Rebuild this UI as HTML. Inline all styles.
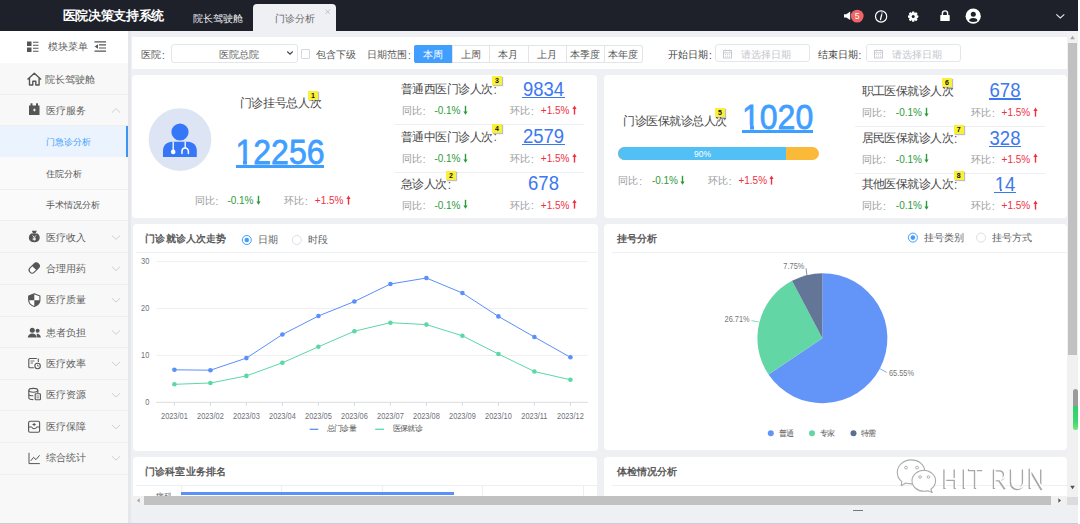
<!DOCTYPE html>
<html><head><meta charset="utf-8"><style>
*{box-sizing:border-box;margin:0;padding:0}
html,body{width:1080px;height:524px;overflow:hidden;background:#eff0f4;font-family:"Liberation Sans",sans-serif;color:#333}
.a{position:absolute;white-space:nowrap}
.card{position:absolute;background:#fff;border-radius:4px}
.g{color:#999}
.gr{color:#2f9a3c}
.rd{color:#f0303f}
.bd{position:absolute;background:#f9f03a;color:#111;font-weight:bold;font-size:7px;line-height:9px;text-align:center;width:10px;height:9px;box-shadow:1px 1px 1px rgba(0,0,0,.25)}
.sb{position:absolute;left:0;width:128px}
.st{position:absolute;font-size:10px;line-height:14px;color:#555}
</style></head><body>
<div class="a" style="left:0px;top:0px;width:1080px;height:30.5px;background:#1e212a;"></div>
<div class="a" style="left:62.5px;top:6.5px;font-size:12.6px;line-height:18px;color:#fff;font-weight:bold;letter-spacing:-0.3px">医院决策支持系统</div>
<div class="a" style="left:192.5px;top:12.0px;font-size:10px;line-height:14px;color:#f2f3f5;font-weight:normal;">院长驾驶舱</div>
<div class="a" style="left:253px;top:4px;width:83px;height:27px;background:#eff0f4;border-radius:4px 4px 0 0"></div>
<div class="a" style="left:274.5px;top:11.9px;font-size:10px;line-height:14px;color:#666;font-weight:normal;">门诊分析</div>
<svg class="a" style="left:323.5px;top:7.7px" width="8" height="8" viewBox="0 0 8 8"><path d="M1.5 1.5L6 6M6 1.5L1.5 6" stroke="#b9bcc2" stroke-width="0.9"/></svg>
<svg class="a" style="left:838px;top:6px" width="240" height="22" viewBox="838 6 240 22">
<path d="M844 14.2h2.3l3.9-2.6v8.4l-3.9-2.4H844z" fill="#fff"/>
<circle cx="857.2" cy="16.1" r="6.4" fill="#ef6464"/>
<text x="857.2" y="19.3" font-size="8.5" fill="#fff" text-anchor="middle" font-family="Liberation Sans">5</text>
<circle cx="881.1" cy="16.5" r="5.6" fill="none" stroke="#fff" stroke-width="1.2"/>
<path d="M882 12.9v0.1M881.7 14.7l-1.2 4.8" stroke="#fff" stroke-width="1.3" stroke-linecap="round"/>
<g transform="translate(913.2 16.6)"><circle r="3.5" fill="#fff"/><g fill="#fff">
<rect x="-1.3" y="-5.2" width="2.6" height="10.4" rx=".8"/>
<rect x="-1.3" y="-5.2" width="2.6" height="10.4" rx=".8" transform="rotate(45)"/>
<rect x="-1.3" y="-5.2" width="2.6" height="10.4" rx=".8" transform="rotate(90)"/>
<rect x="-1.3" y="-5.2" width="2.6" height="10.4" rx=".8" transform="rotate(135)"/></g>
<circle r="1.5" fill="#1e212a"/></g>
<path d="M942.4 15.5v-2a2.6 2.6 0 0 1 5.2 0v2" fill="none" stroke="#fff" stroke-width="1.4"/>
<rect x="940.3" y="15.1" width="9.4" height="5.9" rx=".6" fill="#fff"/>
<circle cx="973.2" cy="16.2" r="7.6" fill="#fff"/>
<circle cx="973.3" cy="14.3" r="2.5" fill="#1e212a"/>
<path d="M969.2 20.6a4.1 2.6 0 0 1 8.2 0a4.1 1.3 0 0 1-8.2 0z" fill="#1e212a"/>
<path d="M1056.3 14.3l4 3.6l4-3.6" fill="none" stroke="#e6e8ec" stroke-width="1.1"/>
</svg>
<div class="a" style="left:0px;top:30.5px;width:128px;height:494px;background:#f8f8f8;"></div>
<div class="a" style="left:127.5px;top:30.5px;width:3px;height:494px;background:#e6e7eb;"></div>
<div class="a" style="left:0px;top:30.5px;width:127.5px;height:32px;background:#fff;"></div>
<div class="a" style="left:0px;top:93.9px;width:127.5px;height:1px;background:#efefef;"></div>
<div class="a" style="left:0px;top:125.0px;width:127.5px;height:1px;background:#efefef;"></div>
<div class="a" style="left:0px;top:125.5px;width:127.5px;height:31.900000000000006px;background:#ebf4fe;"></div>
<div class="a" style="left:125.5px;top:125.5px;width:2.2px;height:31.900000000000006px;background:#3e94f5;"></div>
<div class="a" style="left:0px;top:156.9px;width:127.5px;height:1px;background:#efefef;"></div>
<div class="a" style="left:0px;top:157.4px;width:127.5px;height:32.099999999999994px;background:#fafafa;"></div>
<div class="a" style="left:0px;top:189.0px;width:127.5px;height:1px;background:#efefef;"></div>
<div class="a" style="left:0px;top:189.5px;width:127.5px;height:31.0px;background:#fafafa;"></div>
<div class="a" style="left:0px;top:220.0px;width:127.5px;height:1px;background:#efefef;"></div>
<div class="a" style="left:0px;top:251.9px;width:127.5px;height:1px;background:#efefef;"></div>
<div class="a" style="left:0px;top:283.5px;width:127.5px;height:1px;background:#efefef;"></div>
<div class="a" style="left:0px;top:315.5px;width:127.5px;height:1px;background:#efefef;"></div>
<div class="a" style="left:0px;top:347.1px;width:127.5px;height:1px;background:#efefef;"></div>
<div class="a" style="left:0px;top:378.7px;width:127.5px;height:1px;background:#efefef;"></div>
<div class="a" style="left:0px;top:410.3px;width:127.5px;height:1px;background:#efefef;"></div>
<div class="a" style="left:0px;top:441.9px;width:127.5px;height:1px;background:#efefef;"></div>
<div class="a" style="left:0px;top:473.5px;width:127.5px;height:1px;background:#efefef;"></div>
<div class="a" style="left:47.7px;top:40.0px;font-size:10px;line-height:14px;color:#606060;font-weight:normal;">模块菜单</div>
<svg class="a" style="left:26px;top:40px" width="82" height="14" viewBox="26 40 82 14">
<rect x="27" y="41.5" width="4.5" height="4.5" fill="#555"/><rect x="27" y="47.5" width="4.5" height="4.5" fill="#555"/>
<path d="M33 42.2h5.5M33 45.2h5.5M33 48.2h5.5M33 51.2h5.5" stroke="#555" stroke-width="1.1"/>
<path d="M94.5 41.8h11.5M99 44.9h7M99 48h7M94.5 51.2h11.5" stroke="#555" stroke-width="1.2"/>
<path d="M98 44.2l-3.3 2.3l3.3 2.3z" fill="#555"/>
</svg>
<div class="a" style="left:45.4px;top:72.5px;font-size:10px;line-height:14px;color:#606060;font-weight:normal;">院长驾驶舱</div>
<div class="a" style="left:45.8px;top:103.5px;font-size:10px;line-height:14px;color:#606060;font-weight:normal;">医疗服务</div>
<div class="a" style="left:45.5px;top:136.2px;font-size:9px;line-height:13px;color:#409eff;font-weight:normal;">门急诊分析</div>
<div class="a" style="left:45.5px;top:168.3px;font-size:9px;line-height:13px;color:#555;font-weight:normal;">住院分析</div>
<div class="a" style="left:45.5px;top:199.1px;font-size:9px;line-height:13px;color:#555;font-weight:normal;">手术情况分析</div>
<div class="a" style="left:45.5px;top:230.6px;font-size:10px;line-height:14px;color:#606060;font-weight:normal;">医疗收入</div>
<div class="a" style="left:45.5px;top:261.8px;font-size:10px;line-height:14px;color:#606060;font-weight:normal;">合理用药</div>
<div class="a" style="left:45.5px;top:293.3px;font-size:10px;line-height:14px;color:#606060;font-weight:normal;">医疗质量</div>
<div class="a" style="left:45.5px;top:325.5px;font-size:10px;line-height:14px;color:#606060;font-weight:normal;">患者负担</div>
<div class="a" style="left:45.5px;top:357.0px;font-size:10px;line-height:14px;color:#606060;font-weight:normal;">医疗效率</div>
<div class="a" style="left:45.5px;top:388.2px;font-size:10px;line-height:14px;color:#606060;font-weight:normal;">医疗资源</div>
<div class="a" style="left:45.5px;top:420.0px;font-size:10px;line-height:14px;color:#606060;font-weight:normal;">医疗保障</div>
<div class="a" style="left:45.5px;top:451.3px;font-size:10px;line-height:14px;color:#606060;font-weight:normal;">综合统计</div>
<svg class="a" style="left:0;top:0" width="128" height="524"><path d="M112 112.5l4-3.8l4 3.8" fill="none" stroke="#c8c9cc" stroke-width="0.9"/></svg>
<svg class="a" style="left:0;top:0" width="128" height="524"><path d="M112 235.6l4 3.8l4-3.8" fill="none" stroke="#c8c9cc" stroke-width="0.9"/></svg>
<svg class="a" style="left:0;top:0" width="128" height="524"><path d="M112 266.8l4 3.8l4-3.8" fill="none" stroke="#c8c9cc" stroke-width="0.9"/></svg>
<svg class="a" style="left:0;top:0" width="128" height="524"><path d="M112 298.3l4 3.8l4-3.8" fill="none" stroke="#c8c9cc" stroke-width="0.9"/></svg>
<svg class="a" style="left:0;top:0" width="128" height="524"><path d="M112 330.5l4 3.8l4-3.8" fill="none" stroke="#c8c9cc" stroke-width="0.9"/></svg>
<svg class="a" style="left:0;top:0" width="128" height="524"><path d="M112 362l4 3.8l4-3.8" fill="none" stroke="#c8c9cc" stroke-width="0.9"/></svg>
<svg class="a" style="left:0;top:0" width="128" height="524"><path d="M112 393.2l4 3.8l4-3.8" fill="none" stroke="#c8c9cc" stroke-width="0.9"/></svg>
<svg class="a" style="left:0;top:0" width="128" height="524"><path d="M112 425l4 3.8l4-3.8" fill="none" stroke="#c8c9cc" stroke-width="0.9"/></svg>
<svg class="a" style="left:0;top:0" width="128" height="524"><path d="M112 456.3l4 3.8l4-3.8" fill="none" stroke="#c8c9cc" stroke-width="0.9"/></svg>
<svg class="a" style="left:0;top:0" width="128" height="524" viewBox="0 0 128 524">
<path d="M27.5 79.5l6.8-6.2l6.8 6.2M29.5 78v7h3.3v-3.8h3v3.8h3.3v-7" fill="none" stroke="#555" stroke-width="1.4" stroke-linejoin="round"/>
<path d="M29 105.5h10.5v9.5h-10.5z" fill="#555"/><rect x="30.5" y="103.3" width="2" height="3" fill="#555"/><rect x="36" y="103.3" width="2" height="3" fill="#555"/>
<path d="M33 110h2.8M34.4 108.6v2.8" stroke="#fff" stroke-width="0.9"/>
<path d="M31.2 233.6C27.6 236 27.8 242.3 34.3 242.3C40.8 242.3 41 236 37.4 233.6Z" fill="#555"/><path d="M31.8 230.8h5l-1.3 2.6h-2.4z" fill="#555"/>
<path d="M32.6 235.4l1.7 2.1l1.7-2.1M34.3 237.5v3.2M32.7 238.3h3.2M32.7 239.6h3.2" stroke="#fff" stroke-width=".8" fill="none"/>
<g transform="rotate(-45 34.2 268)"><rect x="28.3" y="265" width="11.8" height="6" rx="3" fill="#fff" stroke="#555" stroke-width="1.1"/><path d="M34.2 265h3a3 3 0 0 1 0 6h-3z" fill="#555"/></g>
<path d="M34.3 293.8l5.6 2.1v4.3c0 3.3-2.6 5.2-5.6 6.2c-3-1-5.6-2.9-5.6-6.2v-4.3z" fill="#fff" stroke="#555" stroke-width="1.1" stroke-linejoin="round"/>
<path d="M34.3 293.8L28.7 295.9V300.2H34.3Z M34.3 300.2H39.9c0 3.3-2.6 5.2-5.6 6.2Z" fill="#555"/>
<circle cx="32.3" cy="330.3" r="2.5" fill="#555"/><path d="M27.8 337.6a4.5 4.2 0 0 1 9 0z" fill="#555"/>
<circle cx="37.6" cy="330.8" r="2" fill="#555"/><path d="M36.6 333.8a4 3.8 0 0 1 4.2 3.8h-3.6z" fill="#555"/>
<path d="M36.8 358.5h-7a1 1 0 0 0-1 1v7.3a1 1 0 0 0 1 1h4" fill="none" stroke="#555" stroke-width="1.1"/><path d="M38.3 358.5v3.5" stroke="#555" stroke-width="1.1"/><path d="M30.5 361h4M30.5 363h2.5" stroke="#555" stroke-width=".8"/><circle cx="37.6" cy="366" r="2.7" fill="#fff" stroke="#555" stroke-width="1.1"/><path d="M37.6 364.6v1.5h1.2" stroke="#555" stroke-width=".8" fill="none"/>
<ellipse cx="33.3" cy="390.3" rx="4.5" ry="1.9" fill="none" stroke="#555" stroke-width="1.1"/><path d="M28.8 390.3v7.4c0 1 2 1.9 4.5 1.9M37.8 390.3v2.8M28.8 393.9c0 1 2 1.9 4.5 1.9" fill="none" stroke="#555" stroke-width="1.1"/><rect x="35.2" y="393.8" width="5.2" height="6" rx=".6" fill="#fff" stroke="#555" stroke-width="1.1"/><path d="M36.5 396h2.6M36.5 397.8h2.6" stroke="#555" stroke-width=".7"/>
<rect x="28.6" y="421.2" width="11" height="11" rx="1.5" fill="none" stroke="#555" stroke-width="1.1"/><path d="M28.6 427h3.3l.8 1.6h3l.8-1.6h3.1M34.1 422.9v3.2M32.5 424.5h3.2" fill="none" stroke="#555" stroke-width="1"/>
<path d="M29 452.8v10.8h10.8" fill="none" stroke="#555" stroke-width="1"/><path d="M30.8 460.8l2.8-3.4l2.4 2.2l3.6-4.3" fill="none" stroke="#555" stroke-width="1"/>
</svg>
<div class="a" style="left:130.5px;top:30.5px;width:937px;height:6.5px;background:#eff0f4;"></div>
<div class="a" style="left:132px;top:37px;width:935px;height:32px;background:#fff;"></div>
<div class="a" style="left:141px;top:47.9px;font-size:10px;line-height:14px;color:#555;font-weight:normal;">医院<span style="position:relative;top:0.8px;margin-left:1px">:</span></div>
<div class="a" style="left:171px;top:44px;width:126.5px;height:18.5px;border:1px solid #e4e6eb;border-radius:3px;background:#fff"></div>
<div class="a" style="left:219px;top:47.9px;font-size:10px;line-height:14px;color:#606266;font-weight:normal;">医院总院</div>
<svg class="a" style="left:286px;top:50px" width="8" height="6"><path d="M1.3 1.5l2.7 2.7l2.7-2.7" fill="none" stroke="#444" stroke-width="1.1"/></svg>
<div class="a" style="left:300.5px;top:49px;width:9px;height:9.5px;border:1px solid #d6d8dd;border-radius:1px;background:#fff"></div>
<div class="a" style="left:316px;top:47.9px;font-size:10px;line-height:14px;color:#555;font-weight:normal;">包含下级</div>
<div class="a" style="left:367px;top:47.9px;font-size:10px;line-height:14px;color:#555;font-weight:normal;">日期范围<span style="position:relative;top:0.8px;margin-left:1px">:</span></div>
<div class="a" style="left:414px;top:45px;width:229px;height:17.5px;border:1px solid #e2e4e8;border-radius:2px"></div>
<div class="a" style="left:414px;top:45px;width:37.69999999999999px;height:17.5px;background:#409eff;border-radius:2px 0 0 2px"></div>
<div class="a" style="left:414.0px;width:37.69999999999999px;text-align:center;top:47.5px;font-size:10px;line-height:14px;color:#fff;font-weight:normal;">本周</div>
<div class="a" style="left:451.7px;top:45px;width:0.8px;height:17.5px;background:#e2e4e8;"></div>
<div class="a" style="left:451.7px;width:37.69999999999999px;text-align:center;top:47.5px;font-size:10px;line-height:14px;color:#555;font-weight:normal;">上周</div>
<div class="a" style="left:489.4px;top:45px;width:0.8px;height:17.5px;background:#e2e4e8;"></div>
<div class="a" style="left:489.4px;width:38.10000000000002px;text-align:center;top:47.5px;font-size:10px;line-height:14px;color:#555;font-weight:normal;">本月</div>
<div class="a" style="left:527.5px;top:45px;width:0.8px;height:17.5px;background:#e2e4e8;"></div>
<div class="a" style="left:527.5px;width:38.0px;text-align:center;top:47.5px;font-size:10px;line-height:14px;color:#555;font-weight:normal;">上月</div>
<div class="a" style="left:565.5px;top:45px;width:0.8px;height:17.5px;background:#e2e4e8;"></div>
<div class="a" style="left:565.5px;width:38.10000000000002px;text-align:center;top:47.5px;font-size:10px;line-height:14px;color:#555;font-weight:normal;">本季度</div>
<div class="a" style="left:603.6px;top:45px;width:0.8px;height:17.5px;background:#e2e4e8;"></div>
<div class="a" style="left:603.6px;width:39.39999999999998px;text-align:center;top:47.5px;font-size:10px;line-height:14px;color:#555;font-weight:normal;">本年度</div>
<div class="a" style="left:668px;top:47.9px;font-size:10px;line-height:14px;color:#444;font-weight:normal;">开始日期<span style="position:relative;top:0.8px;margin-left:1px">:</span></div>
<div class="a" style="left:817.6px;top:47.9px;font-size:10px;line-height:14px;color:#444;font-weight:normal;">结束日期<span style="position:relative;top:0.8px;margin-left:1px">:</span></div>
<div class="a" style="left:715px;top:44.3px;width:95px;height:18px;border:1px solid #e4e6eb;border-radius:3px;background:#fff"></div>
<svg class="a" style="left:722px;top:48px" width="12" height="12" viewBox="0 0 12 12"><rect x="1.5" y="2.5" width="8" height="7.5" fill="none" stroke="#c8cbd1" stroke-width="1"/><path d="M1.5 4.8h8M3.5 1.5v2M7.5 1.5v2M3 6.5h1M5 6.5h1M7 6.5h1M3 8.3h1M5 8.3h1M7 8.3h1" stroke="#c8cbd1" stroke-width=".9"/></svg>
<div class="a" style="left:740.5px;top:47.9px;font-size:10px;line-height:14px;color:#c2c5cc;font-weight:normal;">请选择日期</div>
<div class="a" style="left:866px;top:44.3px;width:95px;height:18px;border:1px solid #e4e6eb;border-radius:3px;background:#fff"></div>
<svg class="a" style="left:873px;top:48px" width="12" height="12" viewBox="0 0 12 12"><rect x="1.5" y="2.5" width="8" height="7.5" fill="none" stroke="#c8cbd1" stroke-width="1"/><path d="M1.5 4.8h8M3.5 1.5v2M7.5 1.5v2M3 6.5h1M5 6.5h1M7 6.5h1M3 8.3h1M5 8.3h1M7 8.3h1" stroke="#c8cbd1" stroke-width=".9"/></svg>
<div class="a" style="left:891.5px;top:47.9px;font-size:10px;line-height:14px;color:#c2c5cc;font-weight:normal;">请选择日期</div>
<div class="card" style="left:132.3px;top:75px;width:465px;height:143px"></div>
<div class="card" style="left:604px;top:75.3px;width:462.5px;height:142.5px"></div>
<svg class="a" style="left:148px;top:107px" width="64" height="65" viewBox="148 107 64 65">
<circle cx="180" cy="139.6" r="31.4" fill="#dde4f3"/>
<circle cx="180" cy="132" r="8.6" fill="#3577f6"/>
<path d="M163 157V150.5C163 145.5 167 141.7 172 141.7H188C193 141.7 196.8 145.5 196.8 150.5V157Z" fill="#3577f6"/>
<path d="M173.2 141.5V150M185.2 141.5V148" stroke="#fff" stroke-width="1.3" fill="none"/>
<circle cx="173.2" cy="151.9" r="2.3" fill="#fff"/>
<path d="M182 153.6V151.2A3.2 3.2 0 0 1 188.4 151.2V153.6" stroke="#fff" stroke-width="1.5" fill="none" stroke-linecap="round"/>
</svg>
<div class="a" style="left:239.5px;top:95.3px;font-size:12px;line-height:16px;color:#4a4a4a;font-weight:normal;letter-spacing:-0.3px">门诊挂号总人次</div>
<div class="bd" style="left:308px;top:90.6px">1</div>
<div class="a" style="left:235.5px;top:132px;font-size:32px;line-height:38px;color:#409eff;-webkit-text-stroke:0.7px #409eff;transform:scaleY(1.1);transform-origin:0 8px">12256</div>
<div class="a" style="left:235.5px;top:165.2px;width:88.5px;height:3px;background:#409eff;"></div>
<div class="a" style="left:237px;top:160px;width:6px;height:5px;background:#fff;"></div>
<div class="a" style="left:247px;top:160px;width:6px;height:5px;background:#fff;"></div>
<div class="a" style="left:194.5px;top:194.0px;font-size:10px;line-height:14px;color:#999;font-weight:normal;">同比<span style="position:relative;top:0.8px;margin-left:1px">:</span></div>
<div class="a" style="left:227.4px;top:194.0px;font-size:10px;line-height:14px;color:#2f9a3c;font-weight:normal;">-0.1%</div>
<svg class="a" style="left:254.70000000000002px;top:194.7px" width="7" height="11" viewBox="0 0 7 11"><path d="M3.5 0.8v7" stroke="#2f9a3c" stroke-width="1.4"/><path d="M1.4 6.4l2.1 3.4l2.1-3.4z" fill="#2f9a3c"/></svg>
<div class="a" style="left:284px;top:194.0px;font-size:10px;line-height:14px;color:#999;font-weight:normal;">环比<span style="position:relative;top:0.8px;margin-left:1px">:</span></div>
<div class="a" style="left:314.8px;top:194.0px;font-size:10px;line-height:14px;color:#f0303f;font-weight:normal;">+1.5%</div>
<svg class="a" style="left:344.8px;top:194.7px" width="7" height="11" viewBox="0 0 7 11"><path d="M3.5 2.6v7" stroke="#f0303f" stroke-width="1.4"/><path d="M1.4 4.0l2.1-3.4l2.1 3.4z" fill="#f0303f"/></svg>
<div class="a" style="left:401px;top:81.0px;font-size:12px;line-height:16px;color:#4a4a4a;font-weight:normal;letter-spacing:-0.55px">普通西医门诊人次<span style="position:relative;top:0.8px;margin-left:1px">:</span></div>
<div class="bd" style="left:492px;top:76px">3</div>
<div class="a" style="left:503.5px;width:80px;text-align:center;top:77.5px;font-size:18.5px;line-height:22px;color:#3c78f0;transform:scaleY(1.07);transform-origin:0 3.9px">9834</div>
<div class="a" style="left:522.4px;top:96.6px;width:42.2px;height:1.4px;background:#3c78f0;"></div>
<div class="a" style="left:401.7px;top:104.0px;font-size:10px;line-height:14px;color:#999;font-weight:normal;">同比<span style="position:relative;top:0.8px;margin-left:1px">:</span></div>
<div class="a" style="left:434.4px;top:104.0px;font-size:10px;line-height:14px;color:#2f9a3c;font-weight:normal;">-0.1%</div>
<svg class="a" style="left:461.7px;top:104.7px" width="7" height="11" viewBox="0 0 7 11"><path d="M3.5 0.8v7" stroke="#2f9a3c" stroke-width="1.4"/><path d="M1.4 6.4l2.1 3.4l2.1-3.4z" fill="#2f9a3c"/></svg>
<div class="a" style="left:510px;top:104.0px;font-size:10px;line-height:14px;color:#999;font-weight:normal;">环比<span style="position:relative;top:0.8px;margin-left:1px">:</span></div>
<div class="a" style="left:540.8px;top:104.0px;font-size:10px;line-height:14px;color:#f0303f;font-weight:normal;">+1.5%</div>
<svg class="a" style="left:570.8px;top:104.7px" width="7" height="11" viewBox="0 0 7 11"><path d="M3.5 2.6v7" stroke="#f0303f" stroke-width="1.4"/><path d="M1.4 4.0l2.1-3.4l2.1 3.4z" fill="#f0303f"/></svg>
<div class="a" style="left:394px;top:124.3px;width:190px;height:1px;background:#eeeff2;"></div>
<div class="a" style="left:401px;top:128.5px;font-size:12px;line-height:16px;color:#4a4a4a;font-weight:normal;letter-spacing:-0.55px">普通中医门诊人次<span style="position:relative;top:0.8px;margin-left:1px">:</span></div>
<div class="bd" style="left:492px;top:123.5px">4</div>
<div class="a" style="left:503.5px;width:80px;text-align:center;top:125.0px;font-size:18.5px;line-height:22px;color:#3c78f0;transform:scaleY(1.07);transform-origin:0 3.9px">2579</div>
<div class="a" style="left:522.4px;top:144.1px;width:42.2px;height:1.4px;background:#3c78f0;"></div>
<div class="a" style="left:401.7px;top:152.0px;font-size:10px;line-height:14px;color:#999;font-weight:normal;">同比<span style="position:relative;top:0.8px;margin-left:1px">:</span></div>
<div class="a" style="left:434.4px;top:152.0px;font-size:10px;line-height:14px;color:#2f9a3c;font-weight:normal;">-0.1%</div>
<svg class="a" style="left:461.7px;top:152.7px" width="7" height="11" viewBox="0 0 7 11"><path d="M3.5 0.8v7" stroke="#2f9a3c" stroke-width="1.4"/><path d="M1.4 6.4l2.1 3.4l2.1-3.4z" fill="#2f9a3c"/></svg>
<div class="a" style="left:510px;top:152.0px;font-size:10px;line-height:14px;color:#999;font-weight:normal;">环比<span style="position:relative;top:0.8px;margin-left:1px">:</span></div>
<div class="a" style="left:540.8px;top:152.0px;font-size:10px;line-height:14px;color:#f0303f;font-weight:normal;">+1.5%</div>
<svg class="a" style="left:570.8px;top:152.7px" width="7" height="11" viewBox="0 0 7 11"><path d="M3.5 2.6v7" stroke="#f0303f" stroke-width="1.4"/><path d="M1.4 4.0l2.1-3.4l2.1 3.4z" fill="#f0303f"/></svg>
<div class="a" style="left:394px;top:171.6px;width:190px;height:1px;background:#eeeff2;"></div>
<div class="a" style="left:401px;top:175.8px;font-size:12px;line-height:16px;color:#4a4a4a;font-weight:normal;letter-spacing:-0.55px">急诊人次<span style="position:relative;top:0.8px;margin-left:1px">:</span></div>
<div class="bd" style="left:446px;top:170.8px">2</div>
<div class="a" style="left:503.5px;width:80px;text-align:center;top:172.3px;font-size:18.5px;line-height:22px;color:#3c78f0;transform:scaleY(1.07);transform-origin:0 3.9px">678</div>
<div class="a" style="left:401.7px;top:198.6px;font-size:10px;line-height:14px;color:#999;font-weight:normal;">同比<span style="position:relative;top:0.8px;margin-left:1px">:</span></div>
<div class="a" style="left:434.4px;top:198.6px;font-size:10px;line-height:14px;color:#2f9a3c;font-weight:normal;">-0.1%</div>
<svg class="a" style="left:461.7px;top:199.29999999999998px" width="7" height="11" viewBox="0 0 7 11"><path d="M3.5 0.8v7" stroke="#2f9a3c" stroke-width="1.4"/><path d="M1.4 6.4l2.1 3.4l2.1-3.4z" fill="#2f9a3c"/></svg>
<div class="a" style="left:510px;top:198.6px;font-size:10px;line-height:14px;color:#999;font-weight:normal;">环比<span style="position:relative;top:0.8px;margin-left:1px">:</span></div>
<div class="a" style="left:540.8px;top:198.6px;font-size:10px;line-height:14px;color:#f0303f;font-weight:normal;">+1.5%</div>
<svg class="a" style="left:570.8px;top:199.29999999999998px" width="7" height="11" viewBox="0 0 7 11"><path d="M3.5 2.6v7" stroke="#f0303f" stroke-width="1.4"/><path d="M1.4 4.0l2.1-3.4l2.1 3.4z" fill="#f0303f"/></svg>
<div class="a" style="left:623px;top:112.7px;font-size:12px;line-height:16px;color:#4a4a4a;font-weight:normal;letter-spacing:-0.45px">门诊医保就诊总人次</div>
<div class="bd" style="left:715px;top:107.8px">5</div>
<div class="a" style="left:742px;top:96.5px;font-size:32px;line-height:38px;color:#409eff;-webkit-text-stroke:0.7px #409eff;transform:scaleY(1.1);transform-origin:0 8px">1020</div>
<div class="a" style="left:741.5px;top:129.8px;width:71.5px;height:3px;background:#409eff;"></div>
<div class="a" style="left:743px;top:125px;width:7px;height:5px;background:#fff;"></div>
<div class="a" style="left:754px;top:125px;width:6px;height:5px;background:#fff;"></div>
<div class="a" style="left:618.3px;top:147.4px;width:200.7px;height:13px;border-radius:6.5px;background:#fbb93a;overflow:hidden"><div style="width:168px;height:13px;background:#52bff5"></div></div>
<div class="a" style="left:682.5px;width:40px;text-align:center;top:148.0px;font-size:8.5px;line-height:12px;color:#fff;font-weight:normal;">90%</div>
<div class="a" style="left:618.3px;top:174.0px;font-size:10px;line-height:14px;color:#999;font-weight:normal;">同比<span style="position:relative;top:0.8px;margin-left:1px">:</span></div>
<div class="a" style="left:651.9px;top:174.0px;font-size:10px;line-height:14px;color:#2f9a3c;font-weight:normal;">-0.1%</div>
<svg class="a" style="left:679.1999999999999px;top:174.7px" width="7" height="11" viewBox="0 0 7 11"><path d="M3.5 0.8v7" stroke="#2f9a3c" stroke-width="1.4"/><path d="M1.4 6.4l2.1 3.4l2.1-3.4z" fill="#2f9a3c"/></svg>
<div class="a" style="left:707.7px;top:174.0px;font-size:10px;line-height:14px;color:#999;font-weight:normal;">环比<span style="position:relative;top:0.8px;margin-left:1px">:</span></div>
<div class="a" style="left:738.4px;top:174.0px;font-size:10px;line-height:14px;color:#f0303f;font-weight:normal;">+1.5%</div>
<svg class="a" style="left:768.4px;top:174.7px" width="7" height="11" viewBox="0 0 7 11"><path d="M3.5 2.6v7" stroke="#f0303f" stroke-width="1.4"/><path d="M1.4 4.0l2.1-3.4l2.1 3.4z" fill="#f0303f"/></svg>
<div class="a" style="left:861.5px;top:82.6px;font-size:12px;line-height:16px;color:#4a4a4a;font-weight:normal;letter-spacing:-0.55px">职工医保就诊人次</div>
<div class="bd" style="left:942px;top:77.6px">6</div>
<div class="a" style="left:965.0px;width:80px;text-align:center;top:79.1px;font-size:18.5px;line-height:22px;color:#3c78f0;transform:scaleY(1.07);transform-origin:0 3.9px">678</div>
<div class="a" style="left:989.1px;top:98.2px;width:31.9px;height:1.4px;background:#3c78f0;"></div>
<div class="a" style="left:862px;top:106.0px;font-size:10px;line-height:14px;color:#999;font-weight:normal;">同比<span style="position:relative;top:0.8px;margin-left:1px">:</span></div>
<div class="a" style="left:895.8px;top:106.0px;font-size:10px;line-height:14px;color:#2f9a3c;font-weight:normal;">-0.1%</div>
<svg class="a" style="left:923.0999999999999px;top:106.7px" width="7" height="11" viewBox="0 0 7 11"><path d="M3.5 0.8v7" stroke="#2f9a3c" stroke-width="1.4"/><path d="M1.4 6.4l2.1 3.4l2.1-3.4z" fill="#2f9a3c"/></svg>
<div class="a" style="left:971px;top:106.0px;font-size:10px;line-height:14px;color:#999;font-weight:normal;">环比<span style="position:relative;top:0.8px;margin-left:1px">:</span></div>
<div class="a" style="left:1001.6px;top:106.0px;font-size:10px;line-height:14px;color:#f0303f;font-weight:normal;">+1.5%</div>
<svg class="a" style="left:1031.6px;top:106.7px" width="7" height="11" viewBox="0 0 7 11"><path d="M3.5 2.6v7" stroke="#f0303f" stroke-width="1.4"/><path d="M1.4 4.0l2.1-3.4l2.1 3.4z" fill="#f0303f"/></svg>
<div class="a" style="left:855px;top:125.5px;width:190px;height:1px;background:#eeeff2;"></div>
<div class="a" style="left:861.5px;top:130.4px;font-size:12px;line-height:16px;color:#4a4a4a;font-weight:normal;letter-spacing:-0.55px">居民医保就诊人次<span style="position:relative;top:0.8px;margin-left:1px">:</span></div>
<div class="bd" style="left:953.6px;top:125.4px">7</div>
<div class="a" style="left:965.0px;width:80px;text-align:center;top:126.9px;font-size:18.5px;line-height:22px;color:#3c78f0;transform:scaleY(1.07);transform-origin:0 3.9px">328</div>
<div class="a" style="left:989.1px;top:146.0px;width:31.9px;height:1.4px;background:#3c78f0;"></div>
<div class="a" style="left:862px;top:152.7px;font-size:10px;line-height:14px;color:#999;font-weight:normal;">同比<span style="position:relative;top:0.8px;margin-left:1px">:</span></div>
<div class="a" style="left:895.8px;top:152.7px;font-size:10px;line-height:14px;color:#2f9a3c;font-weight:normal;">-0.1%</div>
<svg class="a" style="left:923.0999999999999px;top:153.39999999999998px" width="7" height="11" viewBox="0 0 7 11"><path d="M3.5 0.8v7" stroke="#2f9a3c" stroke-width="1.4"/><path d="M1.4 6.4l2.1 3.4l2.1-3.4z" fill="#2f9a3c"/></svg>
<div class="a" style="left:971px;top:152.7px;font-size:10px;line-height:14px;color:#999;font-weight:normal;">环比<span style="position:relative;top:0.8px;margin-left:1px">:</span></div>
<div class="a" style="left:1001.6px;top:152.7px;font-size:10px;line-height:14px;color:#f0303f;font-weight:normal;">+1.5%</div>
<svg class="a" style="left:1031.6px;top:153.39999999999998px" width="7" height="11" viewBox="0 0 7 11"><path d="M3.5 2.6v7" stroke="#f0303f" stroke-width="1.4"/><path d="M1.4 4.0l2.1-3.4l2.1 3.4z" fill="#f0303f"/></svg>
<div class="a" style="left:855px;top:172.7px;width:190px;height:1px;background:#eeeff2;"></div>
<div class="a" style="left:861.5px;top:176.0px;font-size:12px;line-height:16px;color:#4a4a4a;font-weight:normal;letter-spacing:-0.55px">其他医保就诊人次<span style="position:relative;top:0.8px;margin-left:1px">:</span></div>
<div class="bd" style="left:953.6px;top:171px">8</div>
<div class="a" style="left:965.0px;width:80px;text-align:center;top:172.5px;font-size:18.5px;line-height:22px;color:#3c78f0;transform:scaleY(1.07);transform-origin:0 3.9px">14</div>
<div class="a" style="left:994.2px;top:191.6px;width:21.6px;height:1.4px;background:#3c78f0;"></div>
<div class="a" style="left:995.5px;top:188.8px;width:4.4px;height:2.8px;background:#fff"></div>
<div class="a" style="left:1002.0px;top:188.8px;width:3.2px;height:2.8px;background:#fff"></div>
<div class="a" style="left:862px;top:199.0px;font-size:10px;line-height:14px;color:#999;font-weight:normal;">同比<span style="position:relative;top:0.8px;margin-left:1px">:</span></div>
<div class="a" style="left:895.8px;top:199.0px;font-size:10px;line-height:14px;color:#2f9a3c;font-weight:normal;">-0.1%</div>
<svg class="a" style="left:923.0999999999999px;top:199.7px" width="7" height="11" viewBox="0 0 7 11"><path d="M3.5 0.8v7" stroke="#2f9a3c" stroke-width="1.4"/><path d="M1.4 6.4l2.1 3.4l2.1-3.4z" fill="#2f9a3c"/></svg>
<div class="a" style="left:971px;top:199.0px;font-size:10px;line-height:14px;color:#999;font-weight:normal;">环比<span style="position:relative;top:0.8px;margin-left:1px">:</span></div>
<div class="a" style="left:1001.6px;top:199.0px;font-size:10px;line-height:14px;color:#f0303f;font-weight:normal;">+1.5%</div>
<svg class="a" style="left:1031.6px;top:199.7px" width="7" height="11" viewBox="0 0 7 11"><path d="M3.5 2.6v7" stroke="#f0303f" stroke-width="1.4"/><path d="M1.4 4.0l2.1-3.4l2.1 3.4z" fill="#f0303f"/></svg>
<div class="card" style="left:132.5px;top:224px;width:465px;height:226.5px"></div>
<div class="card" style="left:604px;top:224.2px;width:462.5px;height:226.3px"></div>
<div class="a" style="left:145.3px;top:232.0px;font-size:10px;line-height:14px;color:#505050;font-weight:normal;-webkit-text-stroke:0.35px #505050;letter-spacing:0.15px">门诊就诊人次走势</div>
<svg class="a" style="left:240px;top:234px" width="70" height="12" viewBox="240 234 70 12"><circle cx="246.8" cy="240" r="4.5" fill="#fff" stroke="#409eff" stroke-width="1"/><circle cx="246.8" cy="240" r="2.3" fill="#409eff"/><circle cx="296.8" cy="240" r="4.5" fill="#fff" stroke="#dcdfe6" stroke-width="1"/></svg>
<div class="a" style="left:258px;top:233.0px;font-size:10px;line-height:14px;color:#606266;font-weight:normal;">日期</div>
<div class="a" style="left:307.6px;top:233.0px;font-size:10px;line-height:14px;color:#606266;font-weight:normal;">时段</div>
<div class="a" style="left:135.7px;top:252px;width:461px;height:1px;background:#eeeff2;"></div>
<div class="a" style="left:616.7px;top:232.0px;font-size:10px;line-height:14px;color:#505050;font-weight:normal;-webkit-text-stroke:0.35px #505050;letter-spacing:0.15px">挂号分析</div>
<svg class="a" style="left:900px;top:230px" width="90" height="15" viewBox="900 230 90 15"><circle cx="912.9" cy="237.6" r="4.5" fill="#fff" stroke="#409eff" stroke-width="1"/><circle cx="912.9" cy="237.6" r="2.3" fill="#409eff"/><circle cx="981" cy="237.6" r="4.5" fill="#fff" stroke="#dcdfe6" stroke-width="1"/></svg>
<div class="a" style="left:924.3px;top:230.6px;font-size:10px;line-height:14px;color:#606266;font-weight:normal;">挂号类别</div>
<div class="a" style="left:992px;top:230.6px;font-size:10px;line-height:14px;color:#606266;font-weight:normal;">挂号方式</div>
<div class="a" style="left:611.8px;top:252px;width:455px;height:1px;background:#eeeff2;"></div>
<svg class="a" style="left:0;top:0" width="1080" height="524" viewBox="0 0 1080 524">
<path d="M156.3 261.6H587.7" stroke="#efefef" stroke-width="1"/>
<text transform="translate(149.3 264.20000000000005) scale(1 1.2)" font-size="7.4" fill="#6e7079" text-anchor="end" font-family="Liberation Sans">30</text>
<path d="M156.3 308.5H587.7" stroke="#efefef" stroke-width="1"/>
<text transform="translate(149.3 311.1) scale(1 1.2)" font-size="7.4" fill="#6e7079" text-anchor="end" font-family="Liberation Sans">20</text>
<path d="M156.3 355.4H587.7" stroke="#efefef" stroke-width="1"/>
<text transform="translate(149.3 358.0) scale(1 1.2)" font-size="7.4" fill="#6e7079" text-anchor="end" font-family="Liberation Sans">10</text>
<path d="M156.3 402.3H587.7" stroke="#dcdcdc" stroke-width="1"/>
<text transform="translate(149.3 404.90000000000003) scale(1 1.2)" font-size="7.4" fill="#6e7079" text-anchor="end" font-family="Liberation Sans">0</text>
<path d="M174.4 402.3v3.5" stroke="#d4d8df" stroke-width="1"/>
<path d="M210.4 402.3v3.5" stroke="#d4d8df" stroke-width="1"/>
<path d="M246.4 402.3v3.5" stroke="#d4d8df" stroke-width="1"/>
<path d="M282.4 402.3v3.5" stroke="#d4d8df" stroke-width="1"/>
<path d="M318.4 402.3v3.5" stroke="#d4d8df" stroke-width="1"/>
<path d="M354.4 402.3v3.5" stroke="#d4d8df" stroke-width="1"/>
<path d="M390.4 402.3v3.5" stroke="#d4d8df" stroke-width="1"/>
<path d="M426.4 402.3v3.5" stroke="#d4d8df" stroke-width="1"/>
<path d="M462.4 402.3v3.5" stroke="#d4d8df" stroke-width="1"/>
<path d="M498.4 402.3v3.5" stroke="#d4d8df" stroke-width="1"/>
<path d="M534.4 402.3v3.5" stroke="#d4d8df" stroke-width="1"/>
<path d="M570.4 402.3v3.5" stroke="#d4d8df" stroke-width="1"/>
<text transform="translate(174.4 419.3) scale(1 1.25)" font-size="7.4" fill="#6e7079" text-anchor="middle" font-family="Liberation Sans">2023/01</text>
<text transform="translate(210.4 419.3) scale(1 1.25)" font-size="7.4" fill="#6e7079" text-anchor="middle" font-family="Liberation Sans">2023/02</text>
<text transform="translate(246.4 419.3) scale(1 1.25)" font-size="7.4" fill="#6e7079" text-anchor="middle" font-family="Liberation Sans">2023/03</text>
<text transform="translate(282.4 419.3) scale(1 1.25)" font-size="7.4" fill="#6e7079" text-anchor="middle" font-family="Liberation Sans">2023/04</text>
<text transform="translate(318.4 419.3) scale(1 1.25)" font-size="7.4" fill="#6e7079" text-anchor="middle" font-family="Liberation Sans">2023/05</text>
<text transform="translate(354.4 419.3) scale(1 1.25)" font-size="7.4" fill="#6e7079" text-anchor="middle" font-family="Liberation Sans">2023/06</text>
<text transform="translate(390.4 419.3) scale(1 1.25)" font-size="7.4" fill="#6e7079" text-anchor="middle" font-family="Liberation Sans">2023/07</text>
<text transform="translate(426.4 419.3) scale(1 1.25)" font-size="7.4" fill="#6e7079" text-anchor="middle" font-family="Liberation Sans">2023/08</text>
<text transform="translate(462.4 419.3) scale(1 1.25)" font-size="7.4" fill="#6e7079" text-anchor="middle" font-family="Liberation Sans">2023/09</text>
<text transform="translate(498.4 419.3) scale(1 1.25)" font-size="7.4" fill="#6e7079" text-anchor="middle" font-family="Liberation Sans">2023/10</text>
<text transform="translate(534.4 419.3) scale(1 1.25)" font-size="7.4" fill="#6e7079" text-anchor="middle" font-family="Liberation Sans">2023/11</text>
<text transform="translate(570.4 419.3) scale(1 1.25)" font-size="7.4" fill="#6e7079" text-anchor="middle" font-family="Liberation Sans">2023/12</text>
<path d="M174.4 369.8 L210.4 370.2 L246.4 358.1 L282.4 334.5 L318.4 316.0 L354.4 301.5 L390.4 284.0 L426.4 278.0 L462.4 293.0 L498.4 316.4 L534.4 337.0 L570.4 357.3" fill="none" stroke="#5b8ff9" stroke-width="1"/>
<circle cx="174.4" cy="369.8" r="2.3" fill="#5b8ff9"/>
<circle cx="210.4" cy="370.2" r="2.3" fill="#5b8ff9"/>
<circle cx="246.4" cy="358.1" r="2.3" fill="#5b8ff9"/>
<circle cx="282.4" cy="334.5" r="2.3" fill="#5b8ff9"/>
<circle cx="318.4" cy="316.0" r="2.3" fill="#5b8ff9"/>
<circle cx="354.4" cy="301.5" r="2.3" fill="#5b8ff9"/>
<circle cx="390.4" cy="284.0" r="2.3" fill="#5b8ff9"/>
<circle cx="426.4" cy="278.0" r="2.3" fill="#5b8ff9"/>
<circle cx="462.4" cy="293.0" r="2.3" fill="#5b8ff9"/>
<circle cx="498.4" cy="316.4" r="2.3" fill="#5b8ff9"/>
<circle cx="534.4" cy="337.0" r="2.3" fill="#5b8ff9"/>
<circle cx="570.4" cy="357.3" r="2.3" fill="#5b8ff9"/>
<path d="M174.4 384.3 L210.4 383.0 L246.4 375.9 L282.4 362.8 L318.4 346.8 L354.4 331.2 L390.4 322.7 L426.4 324.6 L462.4 335.8 L498.4 354.0 L534.4 371.5 L570.4 379.8" fill="none" stroke="#5ad8a6" stroke-width="1"/>
<circle cx="174.4" cy="384.3" r="2.3" fill="#5ad8a6"/>
<circle cx="210.4" cy="383.0" r="2.3" fill="#5ad8a6"/>
<circle cx="246.4" cy="375.9" r="2.3" fill="#5ad8a6"/>
<circle cx="282.4" cy="362.8" r="2.3" fill="#5ad8a6"/>
<circle cx="318.4" cy="346.8" r="2.3" fill="#5ad8a6"/>
<circle cx="354.4" cy="331.2" r="2.3" fill="#5ad8a6"/>
<circle cx="390.4" cy="322.7" r="2.3" fill="#5ad8a6"/>
<circle cx="426.4" cy="324.6" r="2.3" fill="#5ad8a6"/>
<circle cx="462.4" cy="335.8" r="2.3" fill="#5ad8a6"/>
<circle cx="498.4" cy="354.0" r="2.3" fill="#5ad8a6"/>
<circle cx="534.4" cy="371.5" r="2.3" fill="#5ad8a6"/>
<circle cx="570.4" cy="379.8" r="2.3" fill="#5ad8a6"/>
<path d="M309.7 429.3h8.6" stroke="#5b8ff9" stroke-width="1.3"/>
<path d="M375.2 429.3h8.8" stroke="#5ad8a6" stroke-width="1.3"/>
</svg>
<div class="a" style="left:326.6px;top:424.2px;font-size:8px;line-height:10px;color:#555;font-weight:normal;letter-spacing:-0.6px">总门诊量</div>
<div class="a" style="left:392.6px;top:424.2px;font-size:8px;line-height:10px;color:#555;font-weight:normal;letter-spacing:-0.6px">医保就诊</div>
<svg class="a" style="left:0;top:0" width="1080" height="524" viewBox="0 0 1080 524">
<path d="M822.4 338.2L822.40 273.20A65 65 0 1 1 768.53 374.57Z" fill="#6395f9"/>
<path d="M822.4 338.2L768.53 374.57A65 65 0 0 1 792.02 280.74Z" fill="#62d6a5"/>
<path d="M822.4 338.2L792.02 280.74A65 65 0 0 1 822.44 273.20Z" fill="#647698"/>
<path d="M806 268.3L807 275.7" stroke="#647698" stroke-width=".8" fill="none"/>
<path d="M751.4 320.6L758.8 322" stroke="#62d6a5" stroke-width=".8" fill="none"/>
<path d="M880 368.8L886.8 372.4" stroke="#6395f9" stroke-width=".8" fill="none"/>
<text transform="translate(804.3 268.5) scale(1 1.25)" font-size="7.4" fill="#777" text-anchor="end" font-family="Liberation Sans">7.75%</text>
<text transform="translate(749.6 322.2) scale(1 1.25)" font-size="7.4" fill="#777" text-anchor="end" font-family="Liberation Sans">26.71%</text>
<text transform="translate(889 376) scale(1 1.25)" font-size="7.4" fill="#777" font-family="Liberation Sans">65.55%</text>
<circle cx="770.8" cy="433.3" r="3" fill="#6395f9"/><circle cx="812" cy="433.3" r="3" fill="#62d6a5"/><circle cx="853.5" cy="433.3" r="3" fill="#5d7092"/>
</svg>
<div class="a" style="left:779px;top:429.2px;font-size:8px;line-height:10px;color:#555;font-weight:normal;letter-spacing:-0.6px">普通</div>
<div class="a" style="left:820px;top:429.2px;font-size:8px;line-height:10px;color:#555;font-weight:normal;letter-spacing:-0.6px">专家</div>
<div class="a" style="left:861px;top:429.2px;font-size:8px;line-height:10px;color:#555;font-weight:normal;letter-spacing:-0.6px">特需</div>
<div class="card" style="left:132.6px;top:456.8px;width:464.5px;height:60px;border-radius:4px 4px 0 0"></div>
<div class="card" style="left:604px;top:456.9px;width:462.5px;height:60px;border-radius:4px 4px 0 0"></div>
<div class="a" style="left:145px;top:464.5px;font-size:10px;line-height:14px;color:#505050;font-weight:normal;-webkit-text-stroke:0.35px #505050;letter-spacing:0.15px">门诊科室业务排名</div>
<div class="a" style="left:616.7px;top:464.5px;font-size:10px;line-height:14px;color:#505050;font-weight:normal;-webkit-text-stroke:0.35px #505050;letter-spacing:0.15px">体检情况分析</div>
<div class="a" style="left:135.5px;top:485.3px;width:461px;height:1px;background:#eeeff2;"></div>
<div class="a" style="left:611.8px;top:485.2px;width:455px;height:1px;background:#eeeff2;"></div>
<div class="a" style="left:181px;top:486px;width:1px;height:10px;background:#eeeff2;"></div>
<div class="a" style="left:281.3px;top:486px;width:1px;height:10px;background:#eeeff2;"></div>
<div class="a" style="left:382px;top:486px;width:1px;height:10px;background:#eeeff2;"></div>
<div class="a" style="left:482px;top:486px;width:1px;height:10px;background:#eeeff2;"></div>
<div class="a" style="left:582.7px;top:486px;width:1px;height:10px;background:#eeeff2;"></div>
<div class="a" style="left:181px;top:491.9px;width:273px;height:3.2px;background:#5b8ff9;"></div>
<div class="a" style="left:156px;top:491.5px;font-size:8px;line-height:9px;color:#444;font-weight:normal;">病科</div>
<svg class="a" style="left:890px;top:455px" width="170" height="40" viewBox="890 455 170 40">
<g fill="#fff" stroke="#ababab" stroke-width="1.1" stroke-linejoin="round">
<path d="M911 459.9c-7.6 0-13.7 5.6-13.7 12.5c0 3.6 1.7 6.9 4.5 9.2l-0.6 4.1l4.6-2.6c1.6.5 3.4.8 5.2.8c7.6 0 13.7-5.6 13.7-12.5S918.6 459.9 911 459.9z"/>
<path d="M924.2 470.3c-6.7 0-12.2 4.7-12.2 10.5s5.5 10.5 12.2 10.5c1.3 0 2.6-.2 3.8-.5l4.2 1.7l-1.4-3.3c2.9-1.9 4.8-5 4.8-8.4c0-5.8-5.5-10.5-12.2-10.5z"/>
</g>
<g fill="#fff" stroke="#a0a0a0" stroke-width=".8"><circle cx="906" cy="467.6" r="1.4"/><circle cx="917" cy="467.6" r="1.4"/><circle cx="920.1" cy="477" r="1.3"/><circle cx="928.5" cy="477" r="1.3"/></g>
<path d="M945 469V488.5M955.3 469V488.5M945 479.3H955.3 M964.4 469V488.5 M968.5 469.5H982.8M975.6 469.5V488.5 M994.5 488.5V469.8H999.5A5 5 0 0 1 999.5 479.8H994.5M999.5 479.8L1005.5 488.5 M1011.5 469V482.5A6 6 0 0 0 1023.5 482.5V469 M1030.3 488.5V469L1041.8 488.5V469" transform="translate(-0.6 0.6)" fill="none" stroke="#a8a8a8" stroke-width="2.3" stroke-linejoin="round"/><path d="M945 469V488.5M955.3 469V488.5M945 479.3H955.3 M964.4 469V488.5 M968.5 469.5H982.8M975.6 469.5V488.5 M994.5 488.5V469.8H999.5A5 5 0 0 1 999.5 479.8H994.5M999.5 479.8L1005.5 488.5 M1011.5 469V482.5A6 6 0 0 0 1023.5 482.5V469 M1030.3 488.5V469L1041.8 488.5V469" transform="translate(0.4 -0.4)" fill="none" stroke="#fff" stroke-width="1.6" stroke-linejoin="round"/>
</svg>
<div class="a" style="left:130.5px;top:496px;width:936.5px;height:9.2px;background:#f1f1f1;"></div>
<div class="a" style="left:143.7px;top:496.3px;width:907px;height:9px;background:#c1c1c1;"></div>
<svg class="a" style="left:134px;top:496px" width="8" height="9"><path d="M5.6 2.2v4.6L3 4.5z" fill="#a3a3a3"/></svg>
<svg class="a" style="left:1056px;top:496px" width="8" height="9"><path d="M2.4 2.2v4.6L5 4.5z" fill="#505050"/></svg>
<div class="a" style="left:1066.8px;top:496px;width:11px;height:9.2px;background:#dcdcdc;"></div>
<div class="a" style="left:130.5px;top:505.2px;width:937px;height:18px;background:#eff0f4;"></div>
<div class="a" style="left:853px;top:510px;width:10px;height:1px;background:#777;"></div>
<div class="a" style="left:0px;top:522.8px;width:1080px;height:1.2px;background:#c9ccd3;"></div>
<div class="a" style="left:1067px;top:30.5px;width:11px;height:466px;background:#f1f1f1;"></div>
<div class="a" style="left:1068px;top:42.7px;width:9px;height:312px;background:#c1c1c1;"></div>
<svg class="a" style="left:1067px;top:33px" width="11" height="8"><path d="M3.2 6.3h4.6L5.5 2.8z" fill="#a3a3a3"/></svg>
<svg class="a" style="left:1067px;top:484px" width="11" height="8"><path d="M3.2 1.8h4.6L5.5 5.3z" fill="#505050"/></svg>
<div class="a" style="left:1072.6px;top:389.2px;width:5.5px;height:40.6px;border-radius:3px;background:linear-gradient(#9b9b9b 0,#9b9b9b 41%,#2fcf6c 41%,#3fd870 80%,#72e67c 100%)"></div>
<div class="a" style="left:1078px;top:0px;width:2px;height:524px;background:#fff;"></div>
</body></html>
